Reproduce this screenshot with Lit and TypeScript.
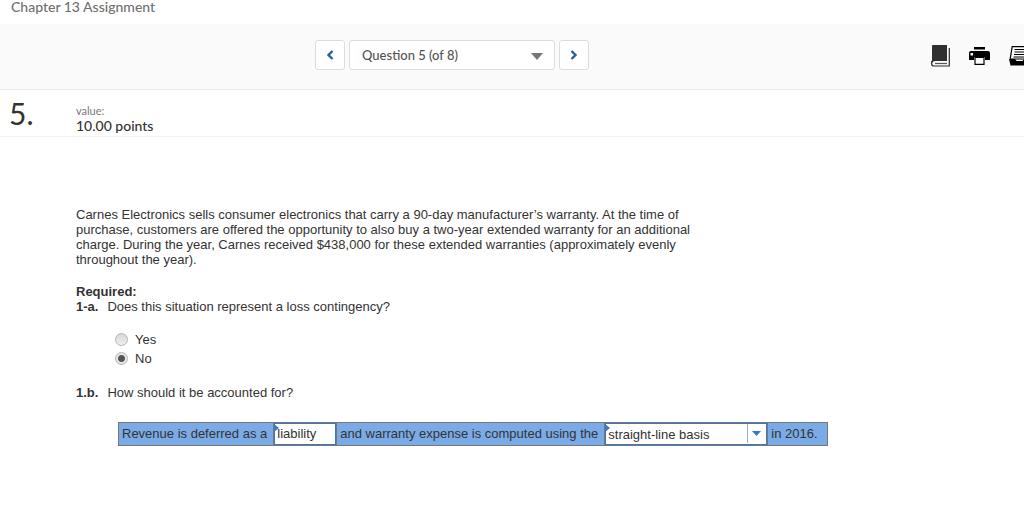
import { LitElement, html, css, svg } from "lit";
import { customElement, state } from "lit/decorators.js";

const bookIcon = svg`<svg width="19" height="22" viewBox="0 0 19 22" aria-hidden="true">
  <path d="M2 0H16V16H4Q2 16 1 18V1Q1 0 2 0Z" fill="#303030"/>
  <path d="M.7 16V19Q.7 21 3 21H18.300V3" fill="none" stroke="#2c2c34" stroke-width="1.200"/>
  <path d="M4 18.500H16" stroke="#555" stroke-width="1.200"/>
</svg>`;

const printIcon = svg`<svg width="21" height="18" viewBox="0 0 21 18" aria-hidden="true">
  <path d="M5 0H16V2.500H5Z" fill="#000"/>
  <path d="M2 4H19Q21 4 21 6V13H16V10H5V13H0V6Q0 4 2 4Z" fill="#000"/>
  <path d="M1.500 6H4V8.500H1.500Z" fill="#fff"/>
  <path d="M6 10.500H15V17.300H6Z" fill="#fff" stroke="#000" stroke-width="1.200"/>
</svg>`;

const trayIcon = svg`<svg width="21" height="20" viewBox="0 0 21 20" aria-hidden="true">
  <path d="M3.200 .6H18L20 13H1.200Z" fill="#fff" stroke="#000" stroke-width="1.200"/>
  <path d="M5.500 3.500H16M5.500 6H16M5 8.500H16M4.500 11H16" stroke="#000" stroke-width="1"/>
  <path d="M0 13H6L7.500 15H13.500L15 13H21L19.500 19.500H1.500Z" fill="#000"/>
</svg>`;

@customElement("app-root")
export class AppRoot extends LitElement {
  static styles = css`
    :host {
      display: block;
      overflow: hidden;
      background: #fff;
      color: #333;
      font: 13px/15px "Liberation Sans", Arial, sans-serif;
    }
    * { box-sizing: border-box; }
    h1, h2, p, fieldset { margin: 0; padding: 0; border: 0; font: inherit; }
    button, select, input { margin: 0; font: inherit; color: inherit; }
    .title, .toolbar, .head, .picker select { font-family: "Lato", sans-serif; }
    .title {
      padding: 0 11px 11px;
      color: #707070;
      font-size: 14px;
      font-weight: 500;
      line-height: 13px;
    }
    .toolbar {
      display: grid;
      grid-template-columns: 1fr auto 1fr;
      align-items: center;
      height: 66px;
      padding-bottom: 4px;
      background: #fafafa;
      border-bottom: 1px solid #eaeaea;
    }
    .nav { display: flex; grid-column: 2; gap: 4px; margin-right: 120px; }
    .step, .picker select {
      height: 30px;
      background: #fff;
      border: 1px solid #ddd;
      border-radius: 3px;
    }
    .step {
      display: grid;
      place-items: center;
      width: 30px;
      padding: 0;
    }
    .picker { position: relative; }
    .picker select {
      display: block;
      width: 206px;
      padding: 2px 12px 0;
      appearance: none;
      color: #555;
      font-size: 13px;
      font-weight: 500;
    }
    .picker svg { position: absolute; right: 12px; top: 13px; pointer-events: none; }
    .tools {
      display: flex;
      grid-column: 3;
      justify-self: end;
      align-items: center;
      gap: 19px;
      margin-right: -6px;
      padding-top: 3px;
    }
    .tools button { padding: 0; border: 0; background: none; }
    .tools svg { display: block; }
    .head {
      display: flex;
      height: 47px;
      padding: 0 9px;
      border-bottom: 1px solid #f2f2f2;
    }
    .number { width: 67px; font-size: 30px; line-height: 46px; }
    .value { padding-top: 14px; color: #777; font-size: 11px; line-height: 14px; }
    .value strong { display: block; color: #333; font-size: 14px; font-weight: 500; line-height: 16px; }
    .content { padding: 70px 76px 74px; }
    .story { max-width: 624px; margin-bottom: 17px; }
    .required { font-weight: 700; }
    .ask { display: flex; gap: 9px; }
    .options { display: grid; gap: 4px; margin: 18px 0 19px 39px; justify-content: start; }
    .option { display: flex; align-items: center; gap: 7px; }
    .option input {
      width: 13px;
      height: 13px;
      appearance: none;
      border: 1px solid #b5b5b5;
      border-radius: 50%;
      background: linear-gradient(#d8d8d8, #eee);
    }
    .option input:checked { background: radial-gradient(circle, #555 0 3px, #e6e6e6 4px); }
    .sentence {
      display: inline-flex;
      height: 24px;
      margin: 22px 0 0 42px;
      border: 1px solid #777;
      background: #7aabe6;
      line-height: 22px;
      white-space: nowrap;
    }
    .words { padding: 0 6px 0 3px; }
    .blank { position: relative; border: solid #777; border-width: 0 1px; }
    .blank::before {
      content: "";
      position: absolute;
      left: 0;
      top: 1px;
      border: solid transparent;
      border-width: 4px 0 4px 5px;
      border-left-color: #3a78c0;
    }
    .blank input, .blank select {
      display: block;
      height: 22px;
      padding: 0 2px;
      border: 1px solid #3a78c0;
      border-radius: 0;
      background: #fff;
      appearance: none;
    }
    .blank input { width: 62px; }
    .blank select { width: 162px; padding-bottom: 2px; }
    .blank svg { position: absolute; right: 1px; top: 1px; pointer-events: none; }
    .last { padding-right: 9px; }
  `;

  @state() private loss = "No";

  private option(name: string) {
    return html`<label class="option">
      <input type="radio" name="loss" .checked=${this.loss === name}
        @change=${() => (this.loss = name)} />${name}
    </label>`;
  }

  private chevron(points: string) {
    return html`<svg width="8" height="10" viewBox="0 0 8 10" aria-hidden="true">
      <polyline points=${points} fill="none" stroke="#2a5c9f" stroke-width="2.4"/>
    </svg>`;
  }

  render() {
    return html`
      <h1 class="title">Chapter 13 Assignment</h1>
      <div class="toolbar">
        <nav class="nav">
          <button class="step" aria-label="Previous question">${this.chevron("6.500,1 2.500,5 6.500,9")}</button>
          <div class="picker">
            <select aria-label="Question"><option>Question 5 (of 8)</option></select>
            <svg width="12" height="7" viewBox="0 0 12 7" aria-hidden="true"><path d="M0 0H12L6 7Z" fill="#777"/></svg>
          </div>
          <button class="step" aria-label="Next question">${this.chevron("1.500,1 5.500,5 1.500,9")}</button>
        </nav>
        <div class="tools">
          <button aria-label="eBook">${bookIcon}</button>
          <button aria-label="Print">${printIcon}</button>
          <button aria-label="Submit">${trayIcon}</button>
        </div>
      </div>
      <header class="head">
        <h2 class="number">5.</h2>
        <div class="value">value:<strong>10.00 points</strong></div>
      </header>
      <main class="content">
        <p class="story">Carnes Electronics sells consumer electronics that carry a 90-day manufacturer’s warranty. At the time of purchase, customers are offered the opportunity to also buy a two-year extended warranty for an additional charge. During the year, Carnes received $438,000 for these extended warranties (approximately evenly throughout the year).</p>
        <p class="required">Required:</p>
        <p class="ask" id="ask-a"><strong>1-a.</strong><span>Does this situation represent a loss contingency?</span></p>
        <fieldset class="options" aria-labelledby="ask-a">
          ${this.option("Yes")}${this.option("No")}
        </fieldset>
        <p class="ask"><strong>1.b.</strong><span>How should it be accounted for?</span></p>
        <div class="sentence">
          <span class="words">Revenue is deferred as a</span>
          <span class="blank"><input aria-label="Revenue is deferred as a" value="liability" /></span>
          <span class="words">and warranty expense is computed using the</span>
          <span class="blank">
            <select aria-label="Warranty expense method"><option>straight-line basis</option></select>
            <svg width="19" height="20" viewBox="0 0 19 20" aria-hidden="true">
              <path d="M.5 0V19" stroke="#8fb4de"/><path d="M5 7H14L9.500 12Z" fill="#3a78c0"/>
            </svg>
          </span>
          <span class="words last">in 2016.</span>
        </div>
      </main>
    `;
  }
}
